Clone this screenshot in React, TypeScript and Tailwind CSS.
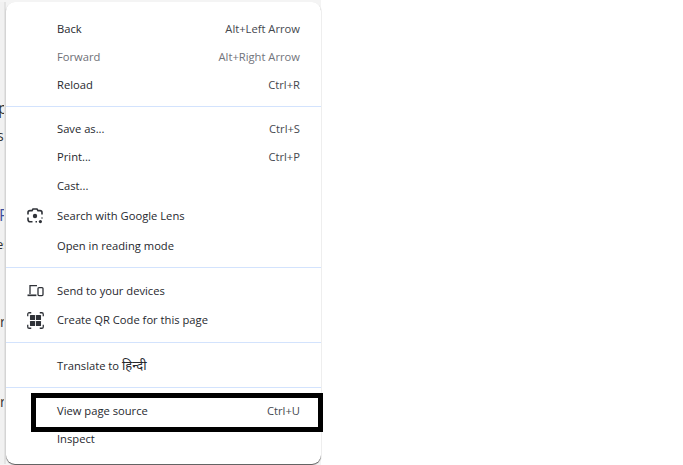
import type { ReactNode } from 'react'

const LensIcon = () => (
  <svg width="16" height="16" viewBox="0 0 16 16" fill="none" stroke="#2f3238" strokeWidth="1.6">
    <path d="M1 6.5V4.5C1 3.4 1.9 2.6 3 2.6H5L6 1H10L11 2.6H13C14.1 2.6 15 3.4 15 4.5V6.5" />
    <path d="M1 9.5V11.5C1 12.8 2 13.8 3.2 13.8H5.5" />
    <path d="M15 9.5V10.5" />
    <path d="M8.5 13.8H10" />
    <circle cx="8" cy="8" r="2.2" fill="#2f3238" stroke="none" />
    <circle cx="13.4" cy="13.6" r="1.6" fill="#2f3238" stroke="none" />
  </svg>
)

const DevicesIcon = () => (
  <svg width="17" height="14" viewBox="0 0 17 14" fill="none" stroke="#2f3238" strokeWidth="1.3">
    <path d="M10 1.6H3V10" />
    <path d="M0.5 11.3H9.4" strokeWidth="1.7" />
    <rect x="11" y="3.6" width="5" height="8" rx="1" />
  </svg>
)

const QrIcon = () => (
  <svg width="17" height="17" viewBox="0 0 16 16" fill="none" stroke="#2f3238" strokeWidth="1.2">
    <path d="M0.7 4V2C0.7 1.2 1.3 0.7 2 0.7H4" />
    <path d="M12 0.7H14C14.7 0.7 15.3 1.2 15.3 2V4" />
    <path d="M0.7 12V14C0.7 14.7 1.3 15.3 2 15.3H4" />
    <path d="M12 15.3H14C14.7 15.3 15.3 14.7 15.3 14V12" />
    <g fill="#2f3238" stroke="none">
      <rect x="2.8" y="2.8" width="4.8" height="4.8" rx="0.5" />
      <rect x="8.4" y="2.8" width="4.8" height="4.8" rx="0.5" />
      <rect x="2.8" y="8.4" width="4.8" height="4.8" rx="0.5" />
      <rect x="8.4" y="8.4" width="4.8" height="4.8" rx="0.5" />
    </g>
  </svg>
)

interface RowProps {
  label: ReactNode
  shortcut?: string
  icon?: ReactNode
  muted?: boolean
  height: string
}

const Row = ({ label, shortcut, icon, muted, height }: RowProps) => (
  <div className={`flex items-center px-[21px] ${height}`}>
    <div className="w-[30px] shrink-0 flex items-center">{icon}</div>
    <span className={muted ? 'text-[#6e6f76]' : 'text-[#26282e]'}>{label}</span>
    {shortcut && <span className={`ml-auto ${muted ? 'text-[#72747b]' : 'text-[#44474e]'}`}>{shortcut}</span>}
  </div>
)

const Divider = ({ className }: { className: string }) => <div className={`h-px bg-[#d3e3fd] ${className}`} />

export default function App() {
  return (
    <div className="relative w-[683px] h-[465px] bg-white overflow-hidden font-['Open_Sans','Noto_Sans','Noto_Sans_CJK_SC',sans-serif]">
      <div className="flex w-[321px] h-[465px] bg-[#f4f4f4] pt-[2px] pb-px">
        {/* page behind the menu, only its cut off line starts show */}
        <div className="w-[6px] shrink-0 overflow-hidden flex flex-col pt-[97px] bg-[#f1f1f1] border-r-2 border-[#e3e3e3] text-[16px] leading-[18px] text-[#333]">
          <span className="-ml-[2px]">p</span>
          <span className="-ml-[3px] mt-[10px] text-[14px]">s</span>
          <span className="-ml-[1px] mt-[61px] text-[#3d4f9f]">P</span>
          <span className="-ml-[4px] mt-[11px] text-[13px]">es</span>
          <span className="mt-[60px] text-[14px]">r</span>
          <span className="mt-[62px] text-[14px]">ri</span>
        </div>

        {/* context menu */}
        <div className="flex-1 bg-white rounded-[9px] pt-[13px] text-[11.2px] shadow-[0_1px_1px_#555]">
          <Row label="Back" shortcut="Alt+Left Arrow" height="h-[28px]" />
          <Row label="Forward" shortcut="Alt+Right Arrow" muted height="h-[28px]" />
          <Row label="Reload" shortcut="Ctrl+R" height="h-[28px]" />
          <Divider className="mt-[7px] mb-[8px]" />
          <Row label="Save as..." shortcut="Ctrl+S" height="h-[28px]" />
          <Row label="Print..." shortcut="Ctrl+P" height="h-[28px]" />
          <Row label="Cast..." height="h-[30px]" />
          <Row label="Search with Google Lens" icon={<LensIcon />} height="h-[30px]" />
          <Row label="Open in reading mode" height="h-[30px]" />
          <Divider className="mt-[6px] mb-[8px]" />
          <Row label="Send to your devices" icon={<DevicesIcon />} height="h-[30px]" />
          <Row label="Create QR Code for this page" icon={<QrIcon />} height="h-[29px]" />
          <Divider className="mt-[7px] mb-[8px]" />
          <Row label={<>Translate to <span className="text-[13px] leading-none">हिन्दी</span></>} height="h-[30px]" />
          <Divider className="mt-[6px] mb-[9px]" />
          <Row label="View page source" shortcut="Ctrl+U" height="h-[29px]" />
          <Row label="Inspect" height="h-[27px]" />
        </div>
      </div>

      {/* highlight drawn over the screenshot */}
      <div className="absolute left-[31px] top-[393px] w-[292px] h-[39px] border-[5px] border-black" />
    </div>
  )
}
